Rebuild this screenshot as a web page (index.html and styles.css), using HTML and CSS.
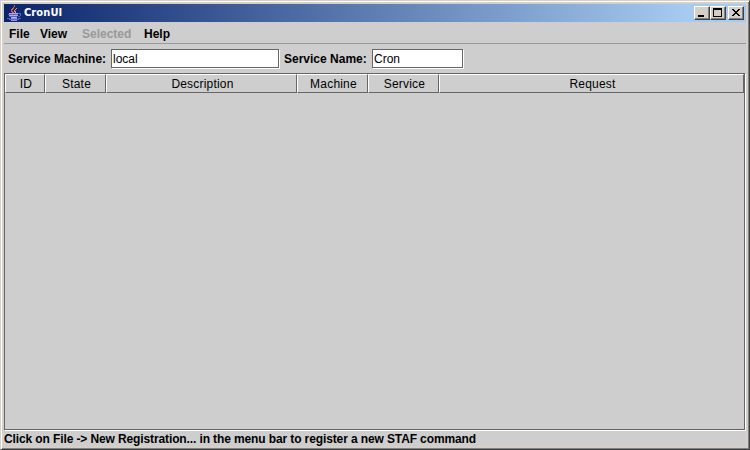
FILE: index.html
```
<!DOCTYPE html>
<html lang="en">
<head>
<meta charset="utf-8">
<title>CronUI</title>
<link rel="stylesheet" href="styles.css">
</head>
<body>
<div class="window">
  <header class="titlebar">
    <svg class="logo" width="16" height="18" viewBox="0 0 16 18" shape-rendering="crispEdges">
      <path d="M7 1h1v2h-1v2h-1v1h-1v1h1v1h1v1h-2v-1h-1v-3h1v-1h1v-1h1z" fill="#e8573f"/>
      <path d="M9 4h1v1h-1v1h-1v1h1v2h-1v-1h-1v-2h1v-1h1z" fill="#f08c78"/>
      <path d="M2 9h9v1h-9zM2 11h9v1h-9zM4 13h6v1h-6z" fill="#a9aef0"/>
      <path d="M1 10h10v1h-10zM2 12h8v1h-8zM11 9h3v1h-3zM13 10h1v2h-1zM11 12h2v1h-2zM0 14h3v1h-3zM11 14h3v1h-3zM2 15h10v1h-10z" fill="#5c63c4"/>
      <path d="M4 14h6v1h-6zM4 16h6v1h-6z" fill="#9398e4"/>
    </svg>
    <span class="title">CronUI</span>
    <div class="controls">
      <button class="control" aria-label="Minimize"><svg width="14" height="12" viewBox="0 0 14 12" shape-rendering="crispEdges"><path d="M3 8h6v2h-6z"/></svg></button>
      <button class="control" aria-label="Maximize"><svg width="14" height="12" viewBox="0 0 14 12" shape-rendering="crispEdges"><path fill-rule="evenodd" d="M2 1h9v9h-9zM3 3v6h7v-6z"/></svg></button>
      <button class="control close" aria-label="Close"><svg width="14" height="12" viewBox="0 0 14 12" shape-rendering="crispEdges"><path d="M3 2h2v1h1v1h2v-1h1v-1h2v1h-1v1h-1v1h-1v1h1v1h1v1h1v1h-2v-1h-1v-1h-2v1h-1v1h-2v-1h1v-1h1v-1h1v-1h-1v-1h-1v-1h-1z"/></svg></button>
    </div>
  </header>
  <nav class="menu">
    <span class="file">File</span><span class="view">View</span><span class="selected">Selected</span><span class="help">Help</span>
  </nav>
  <div class="form">
    <label class="machine-label">Service Machine:</label><div class="field machine">local</div>
    <label class="name-label">Service Name:</label><div class="field name">Cron</div>
  </div>
  <main class="table">
    <div class="head">
      <div class="cell"><span>ID</span></div><div class="cell"><span>State</span></div><div class="cell"><span>Description</span></div><div class="cell"><span>Machine</span></div><div class="cell"><span>Service</span></div><div class="cell"><span>Request</span></div>
    </div>
  </main>
  <footer class="status"><span>Click on File -&gt; New Registration... in the menu bar to register a new STAF command</span></footer>
</div>
</body>
</html>
```
FILE: styles.css
```
* { box-sizing: border-box; }
body {
  margin: 0;
  font: 12px/14px "Liberation Sans", sans-serif;
  color: #000;
  white-space: nowrap;
}
.window {
  display: flex;
  flex-direction: column;
  width: 750px;
  height: 450px;
  padding: 3px 2px 2px 3px;
  background: #cecece;
  border: 1px solid #d4d0c8;
  border-right-color: #404040;
  border-bottom-color: #404040;
  box-shadow: inset 1px 1px #fff, inset -1px -1px #808080, inset 3px 3px #d4d0c8, inset -3px -3px #d4d0c8;
}
.titlebar {
  display: flex;
  align-items: center;
  flex: 0 0 18px;
  width: 742px;
  padding: 0 2px 0 3px;
  background: linear-gradient(90deg, #0a246a, #a6caf0 92%);
}
.title {
  margin-left: 1px;
  color: #fff;
  font: bold 11px/14px "DejaVu Sans Condensed", "DejaVu Sans", sans-serif;
  letter-spacing: 0.1px;
}
.controls { display: flex; margin-left: auto; }
.control {
  width: 16px;
  height: 14px;
  padding: 0;
  border: 1px solid #fff;
  border-right-color: #404040;
  border-bottom-color: #404040;
  background: #d4d0c8;
  box-shadow: inset -1px -1px #808080;
}
.control svg { display: block; }
.close { margin-left: 2px; }
.menu {
  display: flex;
  flex: 0 0 22px;
  width: 742px;
  padding: 5px 0 0 5px;
  border-bottom: 1px solid #999;
  font-weight: bold;
}
.file { width: 31px; }
.view { width: 42px; }
.selected { width: 62px; color: #999; }
.form { display: flex; flex: 0 0 29px; padding: 5px 0 0 4px; }
.form label { padding-top: 3px; font-weight: bold; }
.machine-label { width: 103px; }
.name-label { width: 88px; }
.field {
  height: 19px;
  padding: 2px 1px;
  background: #fff;
  border: 1px solid #666;
  box-shadow: 1px 1px #fff;
}
.machine { width: 168px; margin-right: 5px; }
.name { width: 91px; }
.table {
  flex: 0 0 357px;
  width: 741px;
  border: 1px solid #666;
  box-shadow: 1px 1px #fff;
}
.head {
  display: grid;
  grid-template-columns: 40px 61px 191px 71px 71px 305px;
  height: 19px;
}
.cell {
  padding: 2px 0 0 2px;
  text-align: center;
  border: 1px solid #fff;
  border-right-color: #666;
  border-bottom-color: #666;
  letter-spacing: 0.2px;
}
.status { padding-top: 2px; font-weight: bold; letter-spacing: -0.115px; }
```
